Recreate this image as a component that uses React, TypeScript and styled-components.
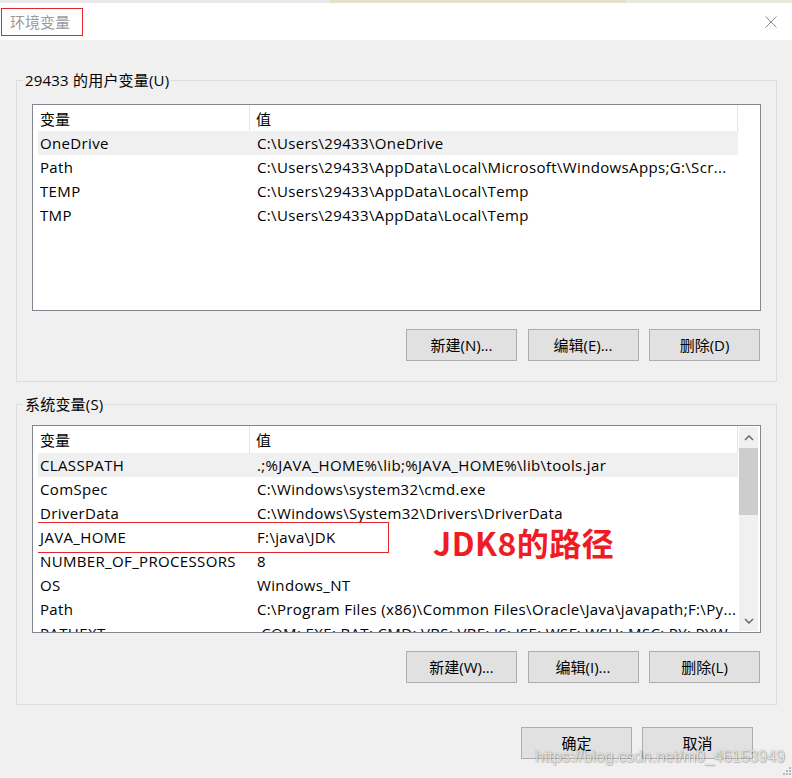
import React from "react";
import styled, { createGlobalStyle } from "styled-components";

const GlobalStyle = createGlobalStyle`
  html, body { margin: 0; padding: 0; background: #f0f0f0; }
  body {
    font-family: "Open Sans", "Noto Sans CJK SC", sans-serif;
    font-size: 15px;
    color: #000;
  }
  * { box-sizing: border-box; }
`;

const Window = styled.div`
  position: relative;
  width: 792px;
  height: 778px;
  overflow: hidden;
  background: #f0f0f0;
  display: flex;
  flex-direction: column;
`;

const TopStrip = styled.div`
  height: 3px;
  flex-shrink: 0;
  background: linear-gradient(
    to right,
    #e9e9e9 0 330px,
    #e6e1c8 330px 626px,
    #ebe8dc 626px
  );
`;

const TitleBar = styled.div`
  height: 37px;
  flex-shrink: 0;
  background: #fff;
  display: flex;
  align-items: center;
  justify-content: space-between;
  padding: 0 15px 0 1px;
`;

const TitleLabel = styled.div`
  width: 82px;
  height: 28px;
  border: 1px solid #e3262e;
  padding-left: 8px;
  line-height: 26px;
  font-size: 15px;
  color: #9b9b9b;
  white-space: nowrap;
`;

const CloseIcon = styled.svg`
  width: 12px;
  height: 12px;
  display: block;
`;

const Content = styled.div`
  padding: 30px 15px 0 16px;
  display: flex;
  flex-direction: column;
`;

const Group = styled.fieldset<{ $padTop: number; $padBottom: number; $gapTop: number }>`
  margin: ${(p) => p.$gapTop}px 0 0 0;
  min-width: 0;
  border: 1px solid #dcdcdc;
  padding: ${(p) => p.$padTop}px 15px ${(p) => p.$padBottom}px 15px;
`;

const Legend = styled.legend`
  margin-left: -9px;
  padding: 0 2px;
  line-height: 20px;
  font-size: 15px;
  color: #000;
  letter-spacing: 0.2px;
`;

const ListView = styled.div<{ $height: number }>`
  height: ${(p) => p.$height}px;
  border: 1px solid #82878f;
  background: #fff;
  display: flex;
  padding-left: 5px;
  overflow: hidden;
`;

const ListMain = styled.div`
  width: 700px;
  flex-shrink: 0;
  display: flex;
  flex-direction: column;
  overflow: hidden;
`;

const HeaderRow = styled.div<{ $height: number }>`
  display: grid;
  grid-template-columns: 212px 1fr;
  height: ${(p) => p.$height}px;
  flex-shrink: 0;
`;

const HeaderCell = styled.div<{ $pad: number }>`
  display: flex;
  align-items: center;
  padding-left: ${(p) => p.$pad}px;
  border-right: 1px solid #e5e5e5;
  white-space: nowrap;
`;

const Row = styled.div<{ $active?: boolean }>`
  position: relative;
  display: grid;
  grid-template-columns: 212px 1fr;
  height: 24px;
  line-height: 24px;
  flex-shrink: 0;
  letter-spacing: 0.35px;
  background: ${(p) => (p.$active ? "#f0f0f0" : "transparent")};
`;

const NameCell = styled.div`
  padding-left: 2px;
  white-space: nowrap;
  overflow: hidden;
`;

const ValueCell = styled.div`
  padding-left: 7px;
  white-space: nowrap;
  overflow: hidden;
`;

const MarkBox = styled.div`
  position: absolute;
  left: -1px;
  top: -3px;
  width: 352px;
  height: 31px;
  border: 1px solid #e3262e;
  pointer-events: none;
`;

const Callout = styled.div`
  position: absolute;
  left: 395px;
  top: 1px;
  font-family: "Noto Sans CJK SC", sans-serif;
  font-weight: 700;
  font-size: 32px;
  line-height: 32px;
  letter-spacing: 0.5px;
  color: #ee1c25;
  white-space: nowrap;
  pointer-events: none;
`;

const Scrollbar = styled.div`
  width: 19px;
  margin: 1px 2px 1px 1px;
  background: #f0f0f0;
  display: flex;
  flex-direction: column;
  flex-shrink: 0;
`;

const ScrollArrow = styled.div`
  height: 21px;
  display: flex;
  align-items: center;
  justify-content: center;
  flex-shrink: 0;
`;

const ScrollTrack = styled.div`
  flex: 1;
`;

const ScrollThumb = styled.div`
  height: 67px;
  background: #cdcdcd;
`;

const ButtonRow = styled.div`
  display: flex;
  justify-content: flex-end;
  gap: 10.5px;
  margin-top: 18px;
  padding-right: 1px;
`;

const Button = styled.button`
  width: 111px;
  height: 32px;
  border: 1px solid #adadad;
  background: #e1e1e1;
  font-family: inherit;
  font-size: 15px;
  color: #000;
  padding: 0;
  line-height: 30px;
  text-align: center;
`;

const Footer = styled.div`
  display: flex;
  justify-content: flex-end;
  gap: 10px;
  margin-top: 22px;
  padding-right: 24px;
`;

const Watermark = styled.div`
  position: absolute;
  left: 535px;
  top: 747px;
  font-family: "Liberation Sans", Arial, sans-serif;
  font-size: 16px;
  line-height: 20px;
  color: rgba(255, 255, 255, 0.8);
  text-shadow: 0 0 1px rgba(0, 0, 0, 0.45), 1px 1px 1px rgba(0, 0, 0, 0.2);
  white-space: nowrap;
  pointer-events: none;
`;

const Grip = styled.svg`
  position: absolute;
  right: 1px;
  bottom: 1px;
  width: 10px;
  height: 10px;
`;

type Variable = {
  name: string;
  value: string;
  active?: boolean;
  marked?: boolean;
  callout?: string;
};

const userVars: Variable[] = [
  { name: "OneDrive", value: "C:\\Users\\29433\\OneDrive", active: true },
  { name: "Path", value: "C:\\Users\\29433\\AppData\\Local\\Microsoft\\WindowsApps;G:\\Scr..." },
  { name: "TEMP", value: "C:\\Users\\29433\\AppData\\Local\\Temp" },
  { name: "TMP", value: "C:\\Users\\29433\\AppData\\Local\\Temp" },
];

const systemVars: Variable[] = [
  { name: "CLASSPATH", value: ".;%JAVA_HOME%\\lib;%JAVA_HOME%\\lib\\tools.jar", active: true },
  { name: "ComSpec", value: "C:\\Windows\\system32\\cmd.exe" },
  { name: "DriverData", value: "C:\\Windows\\System32\\Drivers\\DriverData" },
  { name: "JAVA_HOME", value: "F:\\java\\JDK", marked: true, callout: "JDK8的路径" },
  { name: "NUMBER_OF_PROCESSORS", value: "8" },
  { name: "OS", value: "Windows_NT" },
  { name: "Path", value: "C:\\Program Files (x86)\\Common Files\\Oracle\\Java\\javapath;F:\\Py..." },
  { name: "PATHEXT", value: ".COM;.EXE;.BAT;.CMD;.VBS;.VBE;.JS;.JSE;.WSF;.WSH;.MSC;.PY;.PYW" },
];

const Chevron = ({ up }: { up?: boolean }) => (
  <svg width="10" height="6" viewBox="0 0 10 6">
    <polyline
      points={up ? "1,5 5,1 9,5" : "1,1 5,5 9,1"}
      fill="none"
      stroke="#606060"
      strokeWidth="1.4"
    />
  </svg>
);

function VariableList({
  rows,
  height,
  headerHeight,
  scroll,
}: {
  rows: Variable[];
  height: number;
  headerHeight: number;
  scroll?: boolean;
}) {
  return (
    <ListView $height={height}>
      <ListMain>
        <HeaderRow $height={headerHeight}>
          <HeaderCell $pad={2}>变量</HeaderCell>
          <HeaderCell $pad={6}>值</HeaderCell>
        </HeaderRow>
        {rows.map((r) => (
          <Row key={r.name + r.value} $active={r.active}>
            <NameCell>{r.name}</NameCell>
            <ValueCell>{r.value}</ValueCell>
            {r.marked && <MarkBox />}
            {r.callout && <Callout>{r.callout}</Callout>}
          </Row>
        ))}
      </ListMain>
      {scroll && (
        <Scrollbar>
          <ScrollArrow>
            <Chevron up />
          </ScrollArrow>
          <ScrollTrack>
            <ScrollThumb />
          </ScrollTrack>
          <ScrollArrow>
            <Chevron />
          </ScrollArrow>
        </Scrollbar>
      )}
    </ListView>
  );
}

export default function App() {
  return (
    <>
      <GlobalStyle />
      <Window>
        <TopStrip />
        <TitleBar>
          <TitleLabel>环境变量</TitleLabel>
          <CloseIcon viewBox="0 0 12 12">
            <path d="M0.5 0.5 L11.5 11.5 M11.5 0.5 L0.5 11.5" stroke="#8e8e8e" strokeWidth="1" />
          </CloseIcon>
        </TitleBar>
        <Content>
          <Group $padTop={14} $padBottom={20} $gapTop={0}>
            <Legend>29433 的用户变量(U)</Legend>
            <VariableList rows={userVars} height={207} headerHeight={26} />
            <ButtonRow>
              <Button>新建(N)...</Button>
              <Button>编辑(E)...</Button>
              <Button>删除(D)</Button>
            </ButtonRow>
          </Group>
          <Group $padTop={11} $padBottom={21} $gapTop={12}>
            <Legend>系统变量(S)</Legend>
            <VariableList rows={systemVars} height={208} headerHeight={27} scroll />
            <ButtonRow>
              <Button>新建(W)...</Button>
              <Button>编辑(I)...</Button>
              <Button>删除(L)</Button>
            </ButtonRow>
          </Group>
          <Footer>
            <Button>确定</Button>
            <Button>取消</Button>
          </Footer>
        </Content>
        <Watermark>https://blog.csdn.net/m0_46153949</Watermark>
        <Grip viewBox="0 0 10 10">
          <g fill="#b8b8b8">
            <rect x="8" y="0" width="2" height="2" />
            <rect x="5" y="3" width="2" height="2" />
            <rect x="8" y="3" width="2" height="2" />
            <rect x="2" y="6" width="2" height="2" />
            <rect x="5" y="6" width="2" height="2" />
            <rect x="8" y="6" width="2" height="2" />
          </g>
        </Grip>
      </Window>
    </>
  );
}
